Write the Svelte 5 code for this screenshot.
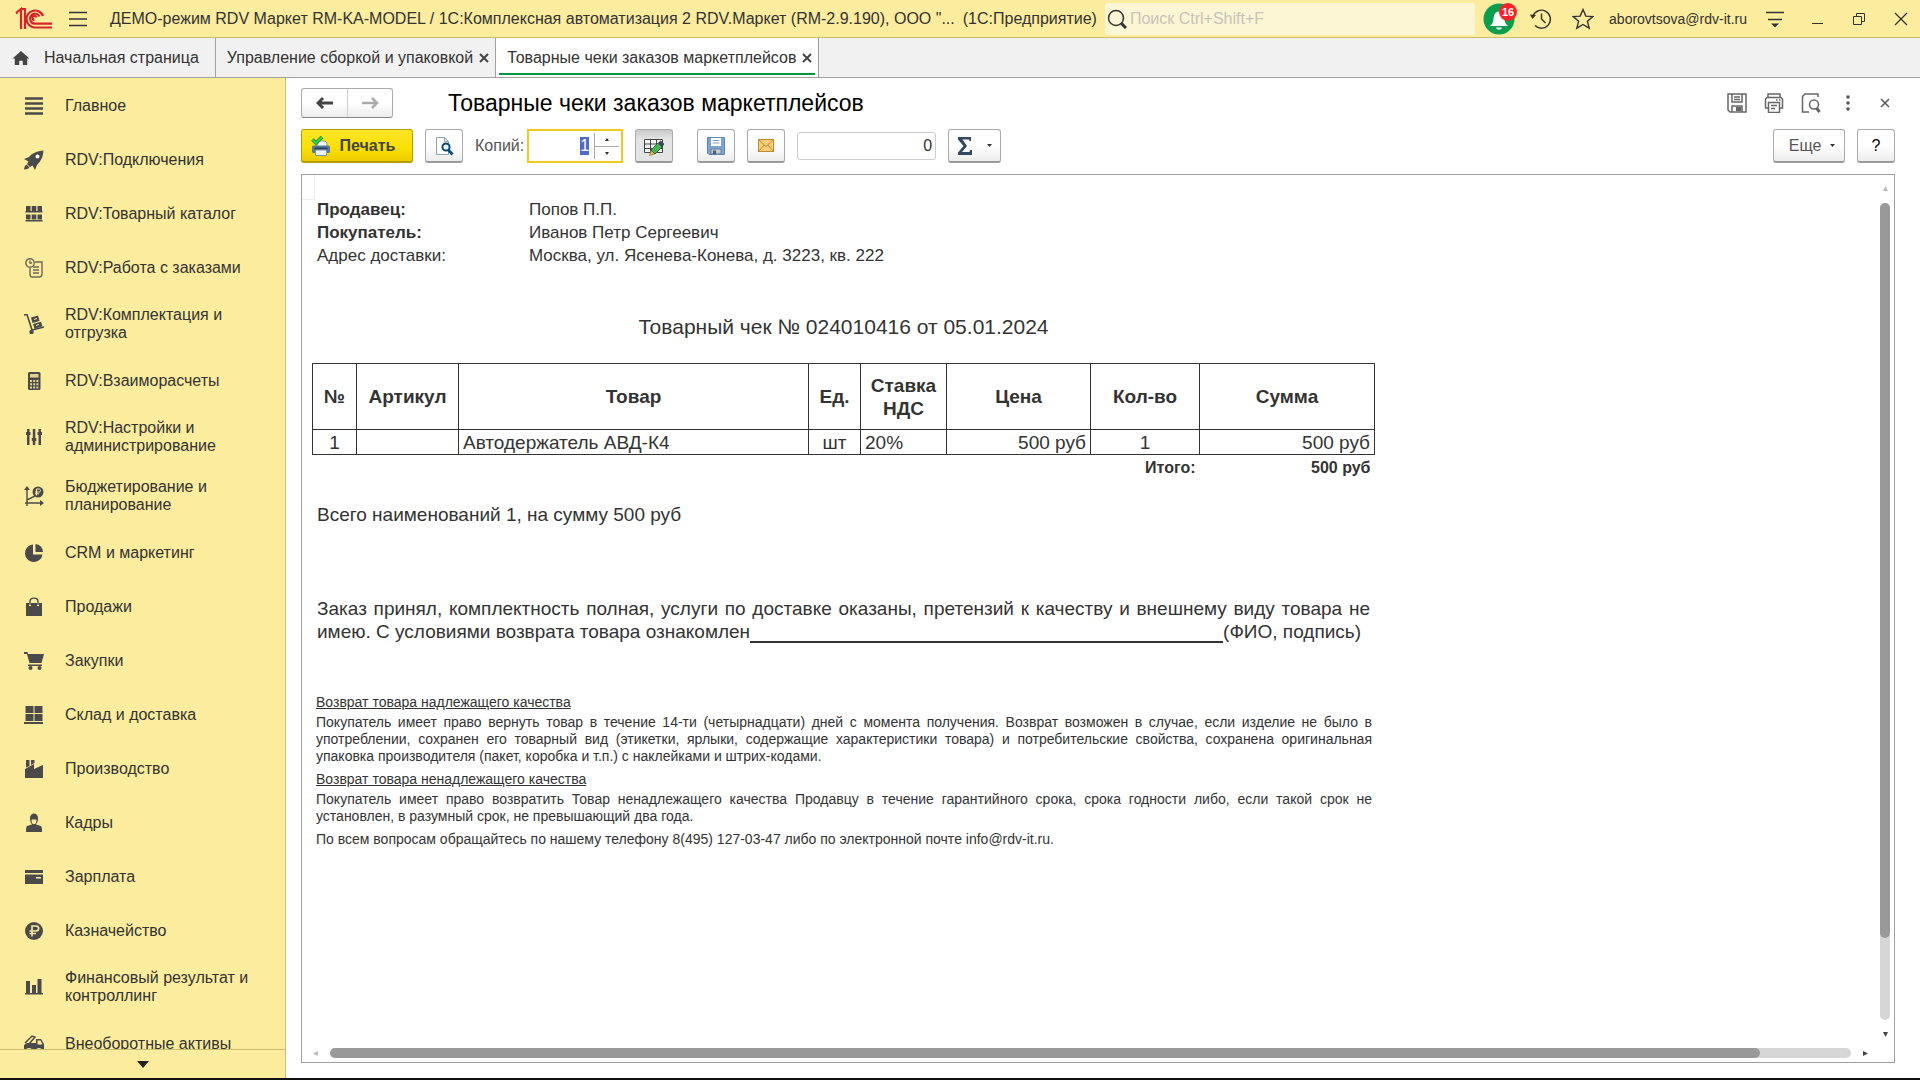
<script>
  import { onMount } from 'svelte';

  // sidebar sections, icons are drawn on a 20x20 grid
  const sections = [
    { name: 'Главное', icon: '<path d="M1 2.5h18M1 7.5h18M1 12.5h18M1 17.5h18" fill="none" stroke="currentColor" stroke-width="2.4"/>' },
    { name: 'RDV:Подключения', icon: '<path d="M19.500.5C13 1 8 3.500 5 7L0 9l4.500 2.500L3 14l3 3 2.500-1.500L11 20l2-5c4-4 6-8 6.500-14.500z"/><path d="M2.500 14.500c-2 1-2 3-2.500 5 2-.3 4 0 5.500-2z"/><circle cx="13.500" cy="6.500" r="2" fill="#fff"/>' },
    { name: 'RDV:Товарный каталог', icon: '<path d="M2 2h4.500v5H2zM7.700 2h4.600v5H7.700zM13.500 2H18v5h-4.500zM2 10.500h4.500v5H2zM7.700 10.500h4.600v5H7.700zM13.500 10.500H18v5h-4.500zM1.500 7h17v1.500h-17zM1.500 16h17v1.500h-17z"/>' },
    { name: 'RDV:Работа с заказами', icon: '<g fill="none" stroke="currentColor" stroke-width="1.4" opacity=".8"><circle cx="6" cy="5" r="4.200"/><path d="M6 2.500V5h2M11 4h7v12c0 2-1 3-3 3H8c-2 0-2-2-2-3v-6M9 9h6M9 12h6M9 15h6"/></g>' },
    { name: 'RDV:Комплектация и отгрузка', icon: '<path d="M0 1l3-.5L8 16l12-3" fill="none" stroke="currentColor" stroke-width="1.600"/><circle cx="7.500" cy="18" r="2.200"/><path d="M7 3.500l7-2L15.500 7l-7 2zM9 10l8-2.200 1.500 4.500-8 2.500z"/><path d="M10 5.500l3-1M12 11.500l3-1" stroke="#fbec9e"/>' },
    { name: 'RDV:Взаиморасчеты', icon: '<rect x="4" y="1" width="12.500" height="18" rx="1.500"/><path d="M6 3h8.500v3.500H6zM6 9h2v2H6zM9.200 9h2v2h-2zM12.400 9h2v2h-2zM6 12.200h2v2H6zM9.200 12.200h2v2h-2zM12.400 12.200h2v2h-2zM6 15.400h2v2H6zM9.200 15.400h2v2h-2zM12.400 15.400h2v2h-2z" fill="#fbec9e" opacity=".85"/>' },
    { name: 'RDV:Настройки и администрирование', icon: '<path d="M3 2h2.500v3h1v3h-1v10H3V8H2V5h1zM8.800 2h2.500v9h1v3h-1v4H8.800v-4h-1v-3h1zM14.500 2H17v3h1v3h-1v10h-2.500V8h-1V5h1z"/>' },
    { name: 'Бюджетирование и планирование', icon: '<path d="M3 2v18M1 17h15M3 14c3-2 6-2 9-5" fill="none" stroke="currentColor" stroke-width="1.400"/><path d="M0 4l3-4 3 4zM16 14l4 3-4 3z"/><circle cx="14" cy="6" r="5.500"/><path d="M12.500 9.500V3H15c2 0 2 3 0 3h-4M11 7.800h4" fill="none" stroke="#fbec9e"/>' },
    { name: 'CRM и маркетинг', icon: '<path d="M9 1.500a8.800 8.800 0 1 0 9.500 10H9z"/><path d="M11.500 1a8 8 0 0 1 7.500 8h-7.500z"/>' },
    { name: 'Продажи', icon: '<path d="M2 6h3v3h2V6h6v3h2V6h3v13H2z"/><path d="M6 8V4.500C6 0 14 0 14 4.500V8" fill="none" stroke="currentColor" stroke-width="1.400"/>' },
    { name: 'Закупки', icon: '<path d="M0 1h3.500l.6 2H20l-2.500 9H5.500L3 3H0z"/><path d="M4 13.500h14V15H4z"/><circle cx="6.500" cy="17" r="2"/><circle cx="15.500" cy="17" r="2"/>' },
    { name: 'Склад и доставка', icon: '<path d="M1.500 1h8v7h-8zM10.500 1h8v7h-8zM1.500 9h8v7h-8zM10.500 9h8v7h-8zM0 17h19v2H0z"/>' },
    { name: 'Производство', icon: '<path d="M1 19V10l9-5v5l9-4v13zM2 1h3.500v6L2 8.500zM7 1h3.500v3L7 6z"/>' },
    { name: 'Кадры', icon: '<path d="M6 5c0-6 8-6 8 0 .5 4-2 6-2 6.500l5 1.500c1 1 1 3 1 6H2c0-3 0-5 1-6l5-1.500C8 11 5.500 9 6 5z"/><path d="M7.500 6.500h5c0 4-1 4.500-2.500 4.500s-2.500-.5-2.500-4.500z" fill="#fbec9e"/>' },
    { name: 'Зарплата', icon: '<path d="M1 3h18v3H1zM1 7.500h18V17H1z"/><path d="M12 10h5v1.500h-5z" fill="#fbec9e"/>' },
    { name: 'Казначейство', icon: '<circle cx="10" cy="10" r="9"/><path d="M8 15.500V5h4c3.500 0 3.500 5 0 5H5.500M5.500 12.500H12" fill="none" stroke="#fbec9e" stroke-width="1.600"/>' },
    { name: 'Финансовый результат и контроллинг', icon: '<path d="M2 4h4v12H2zM8 8h4v8H8zM13.500 2h4v14h-4zM1 16h18v1.500H1z"/>' },
    { name: 'Внеоборотные активы', icon: '<path d="M0 16v-5l3-2h9V5h5l3 5v7h-2a3 3 0 0 0-6 0H8a3 3 0 0 0-6 0z"/><path d="M1 9l7-7 3 1-6 7" fill="none" stroke="currentColor" stroke-width="1.500"/><path d="M13.500 6.500h3l2 4h-5z" fill="#fbec9e"/><circle cx="5" cy="17" r="2"/><circle cx="15" cy="17" r="2"/>' }
  ];

  const tabs = [
    { name: 'Управление сборкой и упаковкой', active: false },
    { name: 'Товарные чеки заказов маркетплейсов', active: true }
  ];

  const parties = [
    { label: 'Продавец:', value: 'Попов П.П.', bold: true },
    { label: 'Покупатель:', value: 'Иванов Петр Сергеевич', bold: true },
    { label: 'Адрес доставки:', value: 'Москва, ул. Ясенева-Конева, д. 3223, кв. 222', bold: false }
  ];

  const goods = [
    { sku: '', name: 'Автодержатель АВД-К4', unit: 'шт', vat: '20%', price: '500 руб', count: 1, sum: '500 руб' }
  ];

  let copies = '1';
  let total = '0';
  let copiesInput;

  onMount(() => {
    copiesInput.focus();
    copiesInput.select();
  });

  const step = d => copies = String(Math.max(1, Number(copies) + d));
</script>

<div class="app">
  <header class="titlebar">
    <svg class="logo" viewBox="0 0 38 24" width="38" height="24" fill="none" stroke="#d8232a" stroke-width="2.200">
      <path d="M1 6l5-4v20M1 6h1.500M6 2h4v20"/>
      <path d="M28 9a8.500 8.500 0 1 0-8.500 11.500H37M24.500 9.500a5 5 0 1 0-5 7.200H37M21.500 10.500a2 2 0 1 0-2 2.500"/>
    </svg>
    <button class="plain burger" aria-label="Меню">
      <svg viewBox="0 0 18 16" width="18" height="16"><path d="M0 1.500h18M0 8h18M0 14.500h18" stroke="currentColor" stroke-width="1.300"/></svg>
    </button>
    <div class="app-name">ДЕМО-режим RDV Маркет RM-KA-MODEL / 1С:Комплексная автоматизация 2 RDV.Маркет (RM-2.9.190), ООО "...</div>
    <div class="platform">(1С:Предприятие)</div>
    <label class="search">
      <svg viewBox="0 0 20 20" width="20" height="20" fill="none" stroke="currentColor"><circle cx="9" cy="9" r="7.500" stroke-width="1.500"/><path d="M14 14l5 5" stroke-width="3"/></svg>
      <input type="text" aria-label="Поиск" placeholder="Поиск Ctrl+Shift+F">
    </label>
    <button class="bell" aria-label="Уведомления">
      <svg viewBox="0 0 32 32" width="32" height="32"><circle cx="16" cy="16" r="15.500" fill="#0a9f4e"/><path d="M7 23c4-3 3-6 4-10 1-6 9-6 10 0 1 4 0 7 4 10z M13 24.500h6c-1 3-5 3-6 0z" fill="#fff"/></svg>
      <span class="badge">16</span>
    </button>
    <button class="plain history" aria-label="История">
      <svg viewBox="0 0 22 22" width="22" height="22" fill="none" stroke="currentColor" stroke-width="1.400"><path d="M3 8a9 9 0 1 1 2 9.500M11.500 5.500V11l4 4"/><path d="M0 6.500l6 .5-3.500 4z" fill="currentColor" stroke="none"/></svg>
    </button>
    <button class="plain star" aria-label="Избранное">
      <svg viewBox="0 0 22 22" width="22" height="22" fill="none" stroke="currentColor" stroke-width="1.400"><path d="M11 1.500l2.800 6.600 7 .5-5.400 4.600 1.800 7L11 16.500l-6.200 3.700 1.800-7L1.200 8.600l7-.5z"/></svg>
    </button>
    <a class="user" href="#user">aborovtsova@rdv-it.ru</a>
    <div class="window-buttons">
      <button class="plain" aria-label="Сервис">
        <svg viewBox="0 0 20 20" width="20" height="20"><path d="M1 3.500h18M3 10.500h14" stroke="currentColor" stroke-width="1.500"/><path d="M6 14.500h8l-4 4z" fill="currentColor"/></svg>
      </button>
      <button class="plain" aria-label="Свернуть">
        <svg viewBox="0 0 20 20" width="20" height="20"><path d="M5 14.500h11" stroke="currentColor"/></svg>
      </button>
      <button class="plain" aria-label="Восстановить">
        <svg viewBox="0 0 20 20" width="20" height="20" fill="none" stroke="currentColor"><path d="M4.500 7.500h8v8h-8zM7.500 7.500v-3h8v8h-3"/></svg>
      </button>
      <button class="plain" aria-label="Закрыть">
        <svg viewBox="0 0 20 20" width="20" height="20"><path d="M4 4l12 12M16 4L4 16" stroke="currentColor" stroke-width="1.300"/></svg>
      </button>
    </div>
  </header>

  <nav class="tabs">
    <a class="tab home" href="#home">
      <svg viewBox="0 0 20 18" width="20" height="16"><path d="M10 1l9.500 8.500H17V17h-5v-5H8v5H3V9.500H.5z" fill="#444"/></svg>
      Начальная страница
    </a>
    {#each tabs as tab}
      <div class="tab" class:active={tab.active}>
        <a href="#tab">{tab.name}</a>
        <button class="plain" aria-label="Закрыть вкладку">
          <svg viewBox="0 0 10 10" width="10" height="10"><path d="M1 1l8 8M9 1L1 9" stroke="#444" stroke-width="2"/></svg>
        </button>
      </div>
    {/each}
  </nav>

  <div class="body">
    <aside>
      <ul>
        {#each sections as section}
          <li>
            <a href="#section">
              <svg viewBox="0 0 20 20" width="20" height="20" fill="currentColor">{@html section.icon}</svg>
              <span>{section.name}</span>
            </a>
          </li>
        {/each}
      </ul>
      <button class="more" aria-label="Прокрутить вниз">
        <svg viewBox="0 0 12 7" width="12" height="7"><path d="M0 0h12L6 7z" fill="#222"/></svg>
      </button>
    </aside>

    <main>
      <div class="heading">
        <div class="nav-buttons">
          <button aria-label="Назад"><svg viewBox="0 0 18 14" width="18" height="14"><path d="M7 2L2 7l5 5M2 7h15" fill="none" stroke="#444" stroke-width="3"/></svg></button>
          <button aria-label="Вперед"><svg viewBox="0 0 18 14" width="18" height="14"><path d="M11 2l5 5-5 5M16 7H1" fill="none" stroke="#aaa" stroke-width="2.500"/></svg></button>
        </div>
        <h1>Товарные чеки заказов маркетплейсов</h1>
        <div class="form-buttons">
          <button class="plain" aria-label="Сохранить">
            <svg viewBox="0 0 20 20" width="20" height="20" fill="none" stroke="#666" stroke-width="1.500"><path d="M1 1h18v18H3l-2-2zM5 1v8h10V1M7 4h6M7 6.500h6M5 19v-6h10v6"/><path d="M9 14h5v4H9z" fill="#666" stroke="none"/></svg>
          </button>
          <button class="plain" aria-label="Печать">
            <svg viewBox="0 0 20 20" width="20" height="20" fill="none" stroke="#666" stroke-width="1.500"><path d="M4 4V1h12v3M4 15H1.500V6L3 4.500h14L18.500 6v9H16M4.500 9.500h11v10h-11zM7 12.500h6M7 15.500h4M12 7h1.500M15 7h1.500"/></svg>
          </button>
          <button class="plain" aria-label="Просмотр">
            <svg viewBox="0 0 20 20" width="20" height="20" fill="none" stroke="#666" stroke-width="1.500"><path d="M17 4V1H4L1.500 3.500V19H8"/><circle cx="13" cy="11.500" r="4.500"/><path d="M15.500 15l3 4" stroke-width="3"/></svg>
          </button>
          <button class="plain" aria-label="Еще действия">
            <svg viewBox="0 0 20 20" width="20" height="20" fill="#555"><circle cx="10" cy="4" r="1.800"/><circle cx="10" cy="10" r="1.800"/><circle cx="10" cy="16" r="1.800"/></svg>
          </button>
          <button class="plain" aria-label="Закрыть форму">
            <svg viewBox="0 0 20 20" width="20" height="20"><path d="M6 6l8 8M14 6l-8 8" stroke="#555" stroke-width="1.500"/></svg>
          </button>
        </div>
      </div>

      <div class="toolbar">
        <button class="btn print">
          <svg viewBox="0 0 20 20" width="20" height="20"><path d="M8 5h6l2 2v4H5z" fill="#f4f7f9" stroke="#8a9aa8"/><rect x="1" y="9.500" width="18" height="7.500" rx="1.500" fill="#587a98"/><path d="M3.500 11.500h13v2h-13z" fill="#2b4358"/><path d="M4.500 14h11v5.500h-11z" fill="#eef3f7" stroke="#7f93a5"/><path d="M1.500 3.500L5 7l6-6" fill="none" stroke="#1a8a22" stroke-width="3.600"/><path d="M1.500 3.500L5 7l6-6" fill="none" stroke="#3fd03a" stroke-width="2"/></svg>
          Печать
        </button>
        <button class="btn icon" aria-label="Предварительный просмотр">
          <svg viewBox="0 0 20 20" width="20" height="20" fill="none"><path d="M2.500 1.500h8l4 4v13h-12z" fill="#fff" stroke="#8aa0b0"/><path d="M10.500 1.500v4h4" stroke="#8aa0b0"/><circle cx="12" cy="11" r="3.600" fill="#e6f3fb" stroke="#0c4a75" stroke-width="2"/><path d="M14.500 14l4 4.500" stroke="#0c4a75" stroke-width="2.800"/></svg>
        </button>
        <label class="copies-label" for="copies">Копий:</label>
        <div class="copies">
          <input id="copies" type="text" inputmode="numeric" bind:value={copies} bind:this={copiesInput}>
          <div class="spin">
            <button class="plain" aria-label="Больше" on:click={() => step(1)}><svg viewBox="0 0 4 3" width="4" height="3"><path d="M0 3h4L2 0z" fill="#333"/></svg></button>
            <button class="plain" aria-label="Меньше" on:click={() => step(-1)}><svg viewBox="0 0 4 3" width="4" height="3"><path d="M0 0h4L2 3z" fill="#333"/></svg></button>
          </div>
        </div>
        <button class="btn icon pressed" aria-label="Редактирование">
          <svg viewBox="0 0 20 20" width="20" height="20"><path d="M.5 3.500h18v13H.5z" fill="#f5f5f5"/><path d="M.5 3.500h18v13H.5zM.5 8h18M.5 12.500h18M6.500 3v13M12.500 3v13" fill="none" stroke="#444"/><path d="M5.500 19.500L7 14l4 4z" fill="#e9b04a" stroke="#6b5520" stroke-width=".5"/><path d="M7 14l7-7 4 4-7 7z" fill="#48b257" stroke="#2c7136"/><path d="M14 7l2.500-2.500 4 3.500L18 11z" fill="#3a4a5c"/></svg>
        </button>
        <button class="btn icon gap" aria-label="Сохранить файл">
          <svg viewBox="0 0 18 18" width="18" height="18"><path d="M.5.5h17v17H2l-1.500-1.500z" fill="#7aa5d6" stroke="#5f86b3"/><path d="M4 1h10v8H4z" fill="#fff"/><path d="M5.500 3.500h7M5.500 6h7" stroke="#8aa0b5"/><path d="M4 12h10v5H4z" fill="#c3ccd3" stroke="#6a8093"/><path d="M6 13.500h3V17H6z" fill="#4a5a69"/></svg>
        </button>
        <button class="btn icon" aria-label="Отправить по почте">
          <svg viewBox="0 0 16 13" width="16" height="13"><rect x=".5" y=".5" width="15" height="12" fill="#f7cf7c" stroke="#c48a2c"/><path d="M1 1l7 6.500L15 1M1 12l5-6M15 12l-5-6" fill="none" stroke="#c48a2c"/></svg>
        </button>
        <input class="total" type="text" aria-label="Сумма ячеек" bind:value={total}>
        <button class="btn sigma" aria-label="Сумма">
          <svg viewBox="0 0 16 18" width="16" height="18"><path d="M1 0h13v4h-1.500L12 2.500H5.500L10 9l-5 6h7.500l.5-2H15v5H1v-2.500L6.500 9 1 2.500z" fill="#34495e"/></svg>
          <svg viewBox="0 0 5 3" width="5" height="3"><path d="M0 0h5L2.500 3z" fill="#333"/></svg>
        </button>
        <button class="btn others">Еще <svg viewBox="0 0 5 3" width="5" height="3"><path d="M0 0h5L2.500 3z" fill="#333"/></svg></button>
        <button class="btn icon help">?</button>
      </div>

      <section class="document">
        <div class="viewport">
          <div class="cell-mark"></div>
          <article class="sheet">
            <dl class="parties">
              {#each parties as party}
                <dt class:bold={party.bold}>{party.label}</dt>
                <dd>{party.value}</dd>
              {/each}
            </dl>

            <h2>Товарный чек № 024010416 от 05.01.2024</h2>

            <table>
              <colgroup>
                <col class="c-num"><col class="c-sku"><col class="c-name"><col class="c-unit">
                <col class="c-vat"><col class="c-price"><col class="c-count"><col class="c-sum">
              </colgroup>
              <thead>
                <tr>
                  <th>№</th><th>Артикул</th><th>Товар</th><th>Ед.</th><th>Ставка НДС</th><th>Цена</th><th>Кол-во</th><th>Сумма</th>
                </tr>
              </thead>
              <tbody>
                {#each goods as item, index}
                  <tr>
                    <td class="center">{index + 1}</td>
                    <td>{item.sku}</td>
                    <td>{item.name}</td>
                    <td class="center">{item.unit}</td>
                    <td>{item.vat}</td>
                    <td class="right">{item.price}</td>
                    <td class="center">{item.count}</td>
                    <td class="right">{item.sum}</td>
                  </tr>
                {/each}
              </tbody>
              <tfoot>
                <tr><td colspan="7">Итого:</td><td>500 руб</td></tr>
              </tfoot>
            </table>

            <p class="summary">Всего наименований 1, на сумму 500 руб</p>

            <p class="accept">Заказ принял, комплектность полная, услуги по доставке оказаны, претензий к качеству и внешнему виду товара не имею. С условиями возврата товара ознакомлен<span class="signature"></span>(ФИО, подпись)</p>

            <div class="terms">
              <h3>Возврат товара надлежащего качества</h3>
              <p>Покупатель имеет право вернуть товар в течение 14-ти (четырнадцати) дней с момента получения. Возврат возможен в случае, если изделие не было в употреблении, сохранен его товарный вид (этикетки, ярлыки, содержащие характеристики товара) и потребительские свойства, сохранена оригинальная упаковка производителя (пакет, коробка и т.п.) с наклейками и штрих-кодами.</p>
              <h3>Возврат товара ненадлежащего качества</h3>
              <p>Покупатель имеет право возвратить Товар ненадлежащего качества Продавцу в течение гарантийного срока, срока годности либо, если такой срок не установлен, в разумный срок, не превышающий два года.</p>
              <p>По всем вопросам обращайтесь по нашему телефону 8(495) 127-03-47 либо по электронной почте info@rdv-it.ru.</p>
            </div>
          </article>
        </div>

        <div class="scroll vertical">
          <svg viewBox="0 0 5 5" width="5" height="5"><path d="M0 5h5L2.500 0z" fill="#bbb"/></svg>
          <div class="track"><div class="thumb"></div></div>
          <svg viewBox="0 0 5 5" width="5" height="5"><path d="M0 0h5L2.500 5z" fill="#444"/></svg>
        </div>
        <div class="scroll horizontal">
          <svg viewBox="0 0 5 5" width="5" height="5"><path d="M5 0v5L0 2.500z" fill="#bbb"/></svg>
          <div class="track"><div class="thumb"></div></div>
          <svg viewBox="0 0 5 5" width="5" height="5"><path d="M0 0v5l5-2.500z" fill="#444"/></svg>
        </div>
      </section>
    </main>
  </div>
</div>

<style>
  :global(body) {
    margin: 0;
  }

  .app {
    display: flex;
    flex-direction: column;
    height: 100vh;
    box-sizing: border-box;
    border-bottom: 2px solid #111;
    overflow: hidden;
    background: #fff;
    color: #333;
    font: 16px/18px "Liberation Sans", Arial, sans-serif;
  }

  button, input {
    font: inherit;
    color: inherit;
    box-sizing: border-box;
  }

  button {
    padding: 0;
    cursor: pointer;
  }

  a {
    color: inherit;
    text-decoration: none;
  }

  svg {
    display: block;
    flex: none;
  }

  .plain {
    display: flex;
    align-items: center;
    justify-content: center;
    background: none;
    border: none;
  }

  /* title bar */

  .titlebar {
    display: flex;
    align-items: center;
    height: 37px;
    flex: none;
    padding-left: 15px;
    background: #fbec9e;
    border-bottom: 1px solid #c9bd72;
    white-space: nowrap;
  }

  .burger {
    margin: 0 23px 0 16px;
  }

  .platform {
    margin: 0 8px;
  }

  .search {
    display: flex;
    align-items: center;
    flex: 1;
    height: 32px;
    padding-left: 2px;
    background: #fdf6d4;
    border-radius: 3px;
  }

  .search input {
    flex: 1;
    min-width: 0;
    padding: 0 3px;
    border: none;
    outline: none;
    background: none;
  }

  .search input::placeholder {
    color: #c6c4b8;
    opacity: 1;
  }

  .bell {
    position: relative;
    margin: 0 15px 0 8px;
    background: none;
    border: none;
  }

  .badge {
    position: absolute;
    top: 0;
    right: -2px;
    width: 18px;
    height: 18px;
    border-radius: 50%;
    background: #f8232a;
    color: #fff;
    font-size: 11px;
    font-weight: bold;
  }

  .star {
    margin: 0 15px 0 20px;
  }

  .user {
    font-size: 14px;
  }

  .window-buttons {
    display: flex;
    gap: 22px;
    margin: 0 9px 0 18px;
  }

  /* tabs */

  .tabs {
    display: flex;
    height: 39px;
    flex: none;
    background: #f1f1f1;
    border-bottom: 1px solid #a0a0a0;
  }

  .tab {
    display: flex;
    align-items: center;
    gap: 6px;
    padding: 0 6px 0 11px;
    border-right: 1px solid #a0a0a0;
    white-space: nowrap;
  }

  .home {
    gap: 13px;
    padding-right: 16px;
  }

  .active {
    background: linear-gradient(#009646, #009646) center bottom 2px / calc(100% - 6px) 2px no-repeat #fff;
  }

  .body {
    display: flex;
    flex: 1;
    min-height: 0;
  }

  /* sidebar */

  aside {
    display: flex;
    flex-direction: column;
    width: 285px;
    flex: none;
    background: #fbec9e;
    border-right: 1px solid #c9bd72;
  }

  ul {
    flex: 1;
    min-height: 0;
    margin: 0;
    padding: 0;
    overflow: hidden;
    list-style: none;
  }

  li a {
    display: flex;
    align-items: center;
    gap: 21px;
    min-height: 54px;
    box-sizing: border-box;
    padding: 12px 24px 11px;
  }

  li svg {
    color: #4a4a4a;
  }

  li span {
    width: 200px;
  }

  .more {
    display: flex;
    align-items: center;
    justify-content: center;
    height: 29px;
    flex: none;
    background: none;
    border: none;
    border-top: 1px solid #c9bd72;
  }

  /* form */

  main {
    display: flex;
    flex-direction: column;
    flex: 1;
    min-width: 0;
    padding: 10px 25px 15px 15px;
  }

  .heading {
    display: flex;
    align-items: center;
    height: 30px;
    flex: none;
  }

  .nav-buttons {
    display: flex;
    border: 1px solid #aaa;
    border-bottom-color: #888;
    border-radius: 3px;
    background: linear-gradient(#fff 50%, #ececec);
  }

  .nav-buttons button {
    display: flex;
    align-items: center;
    justify-content: center;
    width: 45px;
    height: 28px;
    border: none;
    background: none;
  }

  .nav-buttons button + button {
    border-left: 1px solid #ccc;
  }

  h1 {
    flex: 1;
    margin: 0 0 0 55px;
    color: #000;
    font-size: 23px;
    line-height: 28px;
    font-weight: normal;
    white-space: nowrap;
  }

  .form-buttons {
    display: flex;
    gap: 17px;
  }

  .toolbar {
    display: flex;
    align-items: center;
    gap: 12px;
    margin: 11px 0;
    flex: none;
  }

  .btn {
    display: flex;
    align-items: center;
    justify-content: center;
    gap: 9px;
    height: 34px;
    border: 1px solid #aaa;
    border-bottom: 2px solid #999;
    border-radius: 3px;
    background: linear-gradient(#fff 50%, #ececec);
  }

  .icon {
    width: 38px;
  }

  .print {
    width: 112px;
    padding-right: 8px;
    border-color: #b59d00;
    background: linear-gradient(#ffe628, #fadf00 60%, #edcb00);
    color: #444;
    font-weight: bold;
  }

  .pressed {
    background: linear-gradient(#c9c9c9, #e4e4e4 30%);
  }

  .gap {
    margin-left: 12px;
  }

  .copies-label {
    margin-right: -9px;
    color: #555;
  }

  .copies {
    display: flex;
    width: 96px;
    height: 34px;
    box-sizing: border-box;
    border: 2px solid #f5c91b;
    background: #fff;
  }

  .copies input {
    flex: 1;
    min-width: 0;
    padding: 0 3px;
    border: none;
    outline: none;
    text-align: right;
  }

  .copies input::selection {
    background: #4f6bc5;
    color: #fff;
  }

  .spin {
    display: grid;
    grid-template-rows: 1fr 1fr;
    width: 24px;
    margin: 2px;
    border-left: 1px solid #aaa;
  }

  .spin button + button {
    border-top: 1px solid #aaa;
  }

  .total {
    width: 139px;
    height: 28px;
    padding: 0 3px;
    border: 1px solid #ccc;
    border-radius: 3px;
    text-align: right;
  }

  .sigma {
    width: 53px;
    gap: 14px;
  }

  .others {
    width: 72px;
    margin-left: auto;
    padding-left: 6px;
    color: #555;
  }

  .help {
    color: #000;
  }

  /* printed document */

  .document {
    display: grid;
    grid-template: minmax(0, 1fr) 14px / minmax(0, 1fr) 14px;
    flex: 1;
    min-height: 0;
    border: 1px solid #a0a0a0;
  }

  .viewport {
    position: relative;
    overflow: hidden;
  }

  .cell-mark {
    position: absolute;
    top: 0;
    left: 0;
    width: 12px;
    height: 24px;
    border: solid #eee;
    border-width: 0 1px 1px 0;
  }

  .sheet {
    width: 1063px;
    padding: 23px 10px;
  }

  dl {
    display: grid;
    grid-template-columns: 212px 1fr;
    margin: 0;
    padding-left: 5px;
    font-size: 17px;
    line-height: 23px;
  }

  dd {
    margin: 0;
  }

  .bold {
    font-weight: bold;
  }

  h2 {
    margin: 48px 0 24px;
    font-size: 21px;
    line-height: 24px;
    font-weight: normal;
    text-align: center;
  }

  table {
    width: 100%;
    table-layout: fixed;
    border-collapse: collapse;
    font-size: 19px;
    line-height: 23px;
  }

  .c-num { width: 44px; }
  .c-sku { width: 102px; }
  .c-name { width: 350px; }
  .c-unit { width: 52px; }
  .c-vat { width: 86px; }
  .c-price { width: 144px; }
  .c-count { width: 109px; }

  th, td {
    padding: 0 4px;
    border: 1px solid #333;
    white-space: nowrap;
  }

  th {
    height: 65px;
    white-space: normal;
  }

  td {
    height: 24px;
  }

  .center {
    text-align: center;
  }

  .right, tfoot td {
    text-align: right;
  }

  tfoot td {
    border: none;
    font-size: 16px;
    font-weight: bold;
  }

  p {
    margin: 0;
  }

  .summary {
    margin-top: 24px;
    padding-left: 5px;
    font-size: 19px;
    line-height: 23px;
  }

  .accept {
    margin: 71px 5px 51px;
    font-size: 19px;
    line-height: 23px;
    text-align: justify;
  }

  .signature {
    display: inline-block;
    width: 473px;
    border-bottom: 2px solid #333;
    vertical-align: -5px;
  }

  .terms {
    padding: 0 3px 0 4px;
    font-size: 14px;
    line-height: 17px;
    text-align: justify;
  }

  h3 {
    margin: 0 0 3px;
    font-size: 14px;
    font-weight: normal;
    text-decoration: underline;
  }

  .terms p {
    margin-bottom: 6px;
  }

  /* scroll bars */

  .scroll {
    display: flex;
    align-items: center;
    gap: 12px;
  }

  .vertical {
    flex-direction: column;
    padding: 11px 4px 11px 0;
  }

  .horizontal {
    padding: 0 12px 4px 11px;
  }

  .track {
    flex: 1;
    border-radius: 5px;
    background: #d6d6d6;
  }

  .thumb {
    border-radius: 5px;
    background: #999;
  }

  .vertical .track {
    width: 10px;
  }

  .vertical .thumb {
    height: 90%;
  }

  .horizontal .thumb {
    width: 94%;
    height: 10px;
  }
</style>
